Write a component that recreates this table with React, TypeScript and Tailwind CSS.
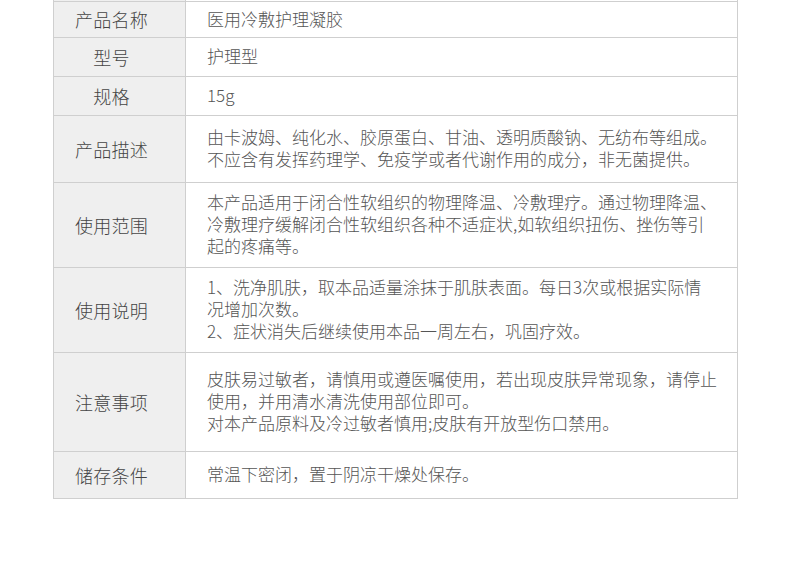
import React from 'react';

type Row = { label: string; lines: string[]; h: number };

const rows: Row[] = [
  { label: '产品名称', lines: ['医用冷敷护理凝胶'], h: 35 },
  { label: '型号', lines: ['护理型'], h: 38 },
  { label: '规格', lines: ['15g'], h: 38 },
  {
    label: '产品描述',
    lines: [
      '由卡波姆、纯化水、胶原蛋白、甘油、透明质酸钠、无纺布等组成。',
      '不应含有发挥药理学、免疫学或者代谢作用的成分，非无菌提供。',
    ],
    h: 66,
  },
  {
    label: '使用范围',
    lines: [
      '本产品适用于闭合性软组织的物理降温、冷敷理疗。通过物理降温、',
      '冷敷理疗缓解闭合性软组织各种不适症状,如软组织扭伤、挫伤等引',
      '起的疼痛等。',
    ],
    h: 84,
  },
  {
    label: '使用说明',
    lines: [
      '1、洗净肌肤，取本品适量涂抹于肌肤表面。每日3次或根据实际情',
      '况增加次数。',
      '2、症状消失后继续使用本品一周左右，巩固疗效。',
    ],
    h: 84,
  },
  {
    label: '注意事项',
    lines: [
      '皮肤易过敏者，请慎用或遵医嘱使用，若出现皮肤异常现象，请停止',
      '使用，并用清水清洗使用部位即可。',
      '对本产品原料及冷过敏者慎用;皮肤有开放型伤口禁用。',
    ],
    h: 98,
  },
  { label: '储存条件', lines: ['常温下密闭，置于阴凉干燥处保存。'], h: 46 },
];

const font = { fontFamily: '"Noto Sans CJK SC", "Noto Sans", sans-serif' };

export default function App() {
  return (
    <div className="w-[790px] h-[567px] bg-white overflow-hidden" style={font}>
      <div className="mx-[53px] w-[685px] border-x border-[#cfcfcf]">
        {/* tail of the row above, cut off by the crop */}
        <div className="flex h-[2px] border-b border-[#cfcfcf]">
          <div className="w-[132px] bg-[#efefef] border-r border-[#cfcfcf]" />
          <div className="flex-1" />
        </div>
        {rows.map((r) => (
          <div key={r.label} className="flex border-b border-[#cfcfcf]" style={{ height: r.h + 1 }}>
            <div className="w-[132px] shrink-0 bg-[#efefef] border-r border-[#cfcfcf] flex items-center justify-center pr-[16px]">
              <span className="text-[18px] font-light tracking-[0.3px] text-[#444]">{r.label}</span>
            </div>
            <div className="flex-1 flex flex-col justify-center pl-[21px] pb-[2px] text-[17px] font-light leading-[22px] text-[#555]">
              {r.lines.map((l, i) => (
                <span key={i} className="whitespace-nowrap">{l}</span>
              ))}
            </div>
          </div>
        ))}
      </div>
    </div>
  );
}
